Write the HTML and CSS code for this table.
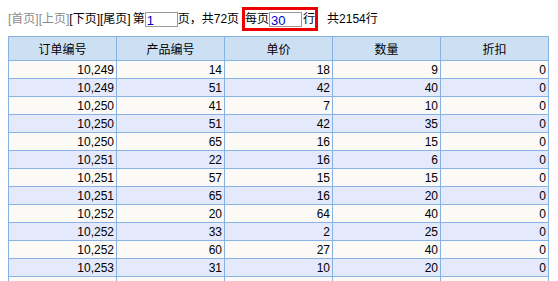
FILE: index.html
```html
<!DOCTYPE html>
<html>
<head>
<meta charset="utf-8">
<link rel="stylesheet" href="styles.css">
</head>
<body>
<div class="bar">
  <span class="off">[首页]</span><span class="off">[上页]</span><span class="on">[下页]</span><span class="on">[尾页]</span>
  <span class="gap">第</span><input class="num w1" value="1"><span>页，共72页</span>
  <span class="box"><span>每页</span><input class="num w2" value="30"><span class="hang">行</span></span>
  <span class="total">共2154行</span>
</div>
<table class="grid">
  <colgroup><col><col><col><col><col></colgroup>
  <thead>
    <tr><th>订单编号</th><th>产品编号</th><th>单价</th><th>数量</th><th>折扣</th></tr>
  </thead>
  <tbody>
    <tr><td>10,249</td><td>14</td><td>18</td><td>9</td><td>0</td></tr>
    <tr><td>10,249</td><td>51</td><td>42</td><td>40</td><td>0</td></tr>
    <tr><td>10,250</td><td>41</td><td>7</td><td>10</td><td>0</td></tr>
    <tr><td>10,250</td><td>51</td><td>42</td><td>35</td><td>0</td></tr>
    <tr><td>10,250</td><td>65</td><td>16</td><td>15</td><td>0</td></tr>
    <tr><td>10,251</td><td>22</td><td>16</td><td>6</td><td>0</td></tr>
    <tr><td>10,251</td><td>57</td><td>15</td><td>15</td><td>0</td></tr>
    <tr><td>10,251</td><td>65</td><td>16</td><td>20</td><td>0</td></tr>
    <tr><td>10,252</td><td>20</td><td>64</td><td>40</td><td>0</td></tr>
    <tr><td>10,252</td><td>33</td><td>2</td><td>25</td><td>0</td></tr>
    <tr><td>10,252</td><td>60</td><td>27</td><td>40</td><td>0</td></tr>
    <tr><td>10,253</td><td>31</td><td>10</td><td>20</td><td>0</td></tr>
    <tr><td></td><td></td><td></td><td></td><td></td></tr>
  </tbody>
</table>
</body>
</html>
```
FILE: styles.css
```css
html, body {
  margin: 0;
  padding: 0;
  background: #ffffff;
}
body {
  padding: 7px 8px 0 8px;
  font-family: "Liberation Sans", "Noto Sans CJK SC", sans-serif;
  font-size: 12px;
  color: #000000;
}
.bar {
  display: flex;
  align-items: center;
  height: 24px;
  white-space: pre;
  line-height: 14px;
}
.off { color: #8c8c8c; }
.on { color: #000000; }
.gap { margin-left: 2px; }
.num {
  box-sizing: border-box;
  height: 15px;
  margin: 0;
  padding: 2px 1px 0 1px;
  border: 1px solid #9a9a9a;
  font-family: "Liberation Sans", sans-serif;
  font-size: 13px;
  line-height: 12px;
  color: #0000cc;
  background: #ffffff;
  outline: none;
}
.w1 { width: 33px; }
.w2 { width: 33px; }
.box {
  display: flex;
  align-items: center;
  box-sizing: border-box;
  height: 24px;
  margin-left: 3px;
  padding: 0;
  border: 3px solid #ee0000;
}
.hang { margin-left: 1px; }
.total { margin-left: 9px; }
.grid {
  margin-top: 5px;
  width: 541px;
  table-layout: fixed;
  border-collapse: collapse;
  border: 1px solid #86b2e4;
}
.grid col { width: 108px; }
.grid th {
  height: 23px;
  padding: 0;
  border: 1px solid #86b2e4;
  background: #cddff2;
  font-weight: normal;
  font-size: 12px;
  text-align: center;
  color: #000;
}
.grid td {
  height: 17px;
  padding: 0 2px 0 0;
  border: 1px solid #86b2e4;
  text-align: right;
  line-height: 14px;
  color: #000;
}
.grid tbody tr:nth-child(odd) td { background: #fbfaf6; }
.grid tbody tr:nth-child(even) td { background: #e5e9fc; }
```
